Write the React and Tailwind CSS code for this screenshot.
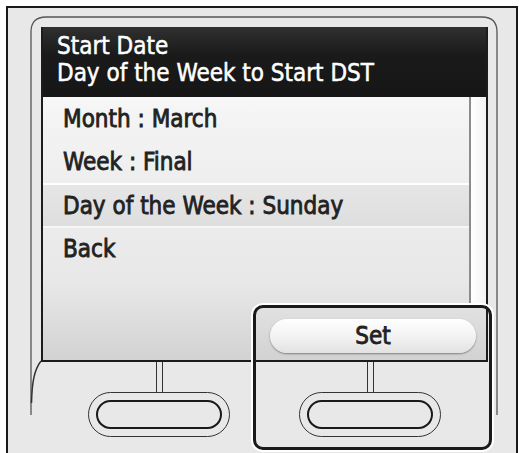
import React from 'react'

const rows = [
  { label: 'Month : March', bg: 'bg-[linear-gradient(#f7f7f7,#f1f1f1)]' },
  { label: 'Week : Final', bg: 'bg-[linear-gradient(#f2f2f2,#eeeeee)]' },
  { label: 'Day of the Week : Sunday', bg: 'bg-[linear-gradient(#e6e6e6,#dedede)] border-t-2 border-white' },
  { label: 'Back', bg: 'border-t-2 border-[#f6f6f6]' },
]

// One hardware key: stem from the screen plus the double oval
function HardKey() {
  return (
    <div className="flex flex-col items-center">
      <div className="w-[7px] h-[30px] border-x border-[#333]" />
      <div className="w-[142px] h-[45px] rounded-full border border-[#333] p-[7px]">
        <div className="w-full h-full rounded-full border-2 border-[#1a1a1a]" />
      </div>
    </div>
  )
}

export default function App() {
  return (
    <div className="w-[521px] h-[453px] bg-white pt-[6px] pl-[6px] overflow-hidden font-['DejaVu_Sans_Condensed','DejaVu_Sans',sans-serif] [font-stretch:condensed]">
      <div className="relative w-[512px] h-[447px] border-2 border-b-0 border-[#1a1a1a] bg-[#e8e8e8]">
        {/* bezel outline */}
        <svg className="absolute inset-0" width="508" height="445" fill="none">
          <path d="M23 407 L23 24 Q23 9 38 9 L474 9 Q489 9 489 24 L489 407" stroke="#555" strokeWidth="1.3" />
          <path d="M33 353 C26 362 24 375 23.5 395" stroke="#333" strokeWidth="1.5" />
        </svg>

        {/* screen */}
        <div className="relative ml-[33px] mt-[19px] w-[447px] h-[335px] flex flex-col border-x-2 border-b-2 border-[#1c1c1c]">
          <div className="h-[70px] bg-[linear-gradient(#303030,#1a1a1a_40%,#161616)] text-white text-[24px] leading-[27px] pl-[14px] pt-[6px] [-webkit-text-stroke:0.5px_#ffffff]">
            <div>Start Date</div>
            <div>Day of the Week to Start DST</div>
          </div>
          <div className="flex-1 flex flex-col bg-[linear-gradient(#f2f2f2,#e8e8e8_70%,#d2d2d2)]">
            <div className="h-[208px] flex">
              <div className="flex-1 flex flex-col">
                {rows.map((r) => (
                  <div key={r.label} className={`h-[43px] flex items-center pl-[20px] text-[24px] font-medium text-[#222] [-webkit-text-stroke:0.8px_#222] ${r.bg}`}>
                    {r.label}
                  </div>
                ))}
              </div>
              <div className="w-[17px] border-l-2 border-[#8c8c8c] bg-[linear-gradient(90deg,#ffffff,#f2f2f2)]" />
            </div>
            <div className="flex-1 flex items-center justify-end pr-[10px] pt-[7px]">
              <div className="w-[206px] h-[34px] rounded-full bg-[linear-gradient(#ffffff,#f0f0f0_60%,#e2e2e2)] shadow-[0_1px_2px_rgba(0,0,0,0.4)] flex items-center justify-center text-[24px] font-medium text-[#222] [-webkit-text-stroke:0.8px_#222]">
                Set
              </div>
            </div>
          </div>
        </div>

        {/* hardware keys */}
        <div className="flex gap-[69px] ml-[80px]">
          <HardKey />
          <HardKey />
        </div>

        {/* selection highlight over the Set key */}
        <div className="absolute left-[245px] top-[297px] w-[239px] h-[145px] border-[3px] border-[#1a1a1a] rounded-[10px] shadow-[0_0_0_2px_#ffffff]" />
      </div>
    </div>
  )
}
